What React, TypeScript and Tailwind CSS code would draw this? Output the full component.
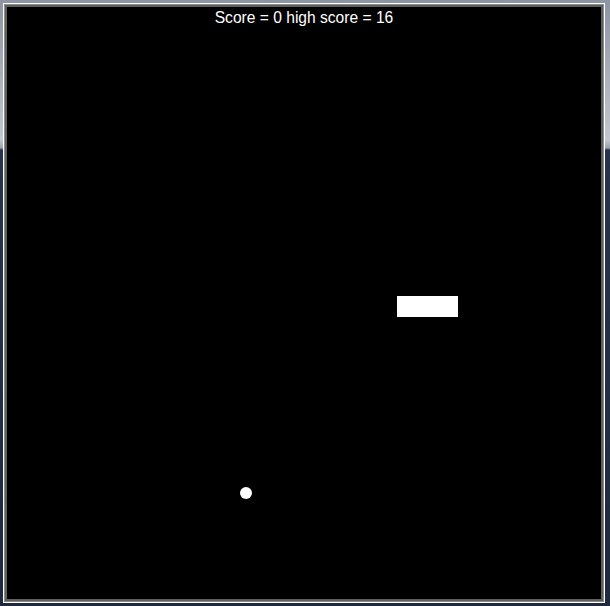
import React from 'react';

const paddle = { x: 390, y: 289, w: 61, h: 21 };
const ball = { x: 233, y: 480, size: 12 };

export default function App() {
  return (
    <div className="w-[610px] h-[606px] pl-[3px] pt-[3px] pr-[5px] pb-[3px] bg-[linear-gradient(to_bottom,#8d94a2_0px,#c3c7ce_140px,#9aa1ad_148px,#27344b_150px,#1f2a3e_606px)]">
      <div className="w-full h-full border border-white bg-[#8c8c8c] p-px">
        <div className="w-full h-full border-2 border-[#5f5f5f] bg-black">
          <div className="relative w-full h-full overflow-hidden">
            <p className="pt-[2px] text-center text-white text-[15.6px] leading-[18px] font-['Liberation_Sans',Arial,sans-serif]">
              Score = 0 high score = 16
            </p>
            <div
              className="absolute bg-white"
              style={{ left: paddle.x, top: paddle.y, width: paddle.w, height: paddle.h }}
            />
            <div
              className="absolute bg-white rounded-full"
              style={{ left: ball.x, top: ball.y, width: ball.size, height: ball.size }}
            />
          </div>
        </div>
      </div>
    </div>
  );
}
